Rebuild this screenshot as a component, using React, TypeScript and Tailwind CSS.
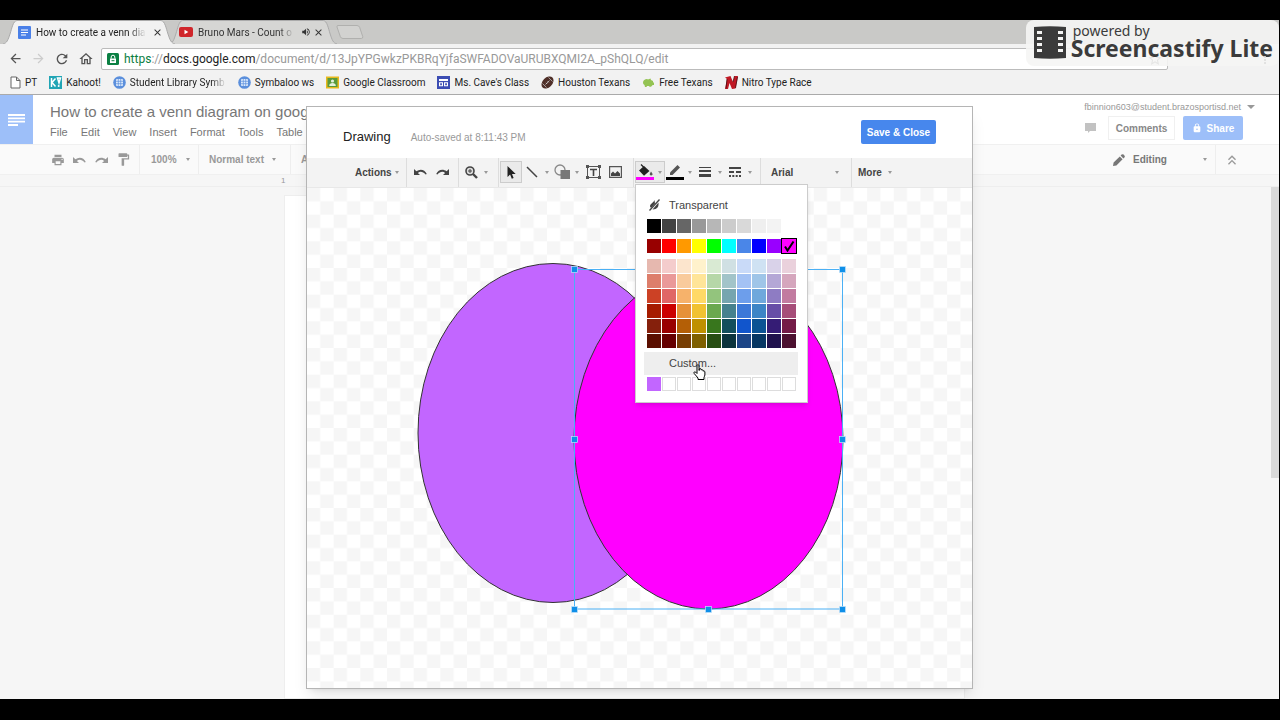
import type { ReactNode } from "react";
import {
  MdArrowBack,
  MdArrowForward,
  MdClose,
  MdFormatPaint,
  MdKeyboardDoubleArrowUp,
  MdLock,
  MdMoreVert,
  MdOutlineHome,
  MdPrint,
  MdRefresh,
  MdStarBorder,
  MdVolumeUp,
} from "react-icons/md";

const grays = ["#000000", "#434343", "#666666", "#999999", "#b7b7b7", "#cccccc", "#d9d9d9", "#efefef", "#f3f3f3", "#ffffff"];

const brights = ["#980000", "#ff0000", "#ff9900", "#ffff00", "#00ff00", "#00ffff", "#4a86e8", "#0000ff", "#9900ff", "#ff00ff"];

const shades = [
  "#e6b8af", "#f4cccc", "#fce5cd", "#fff2cc", "#d9ead3", "#d0e0e3", "#c9daf8", "#cfe2f3", "#d9d2e9", "#ead1dc",
  "#dd7e6b", "#ea9999", "#f9cb9c", "#ffe599", "#b6d7a8", "#a2c4c9", "#a4c2f4", "#9fc5e8", "#b4a7d6", "#d5a6bd",
  "#cc4125", "#e06666", "#f6b26b", "#ffd966", "#93c47d", "#76a5af", "#6d9eeb", "#6fa8dc", "#8e7cc3", "#c27ba0",
  "#a61c00", "#cc0000", "#e69138", "#f1c232", "#6aa84f", "#45818e", "#3c78d8", "#3d85c6", "#674ea7", "#a64d79",
  "#85200c", "#990000", "#b45f06", "#bf9000", "#38761d", "#134f5c", "#1155cc", "#0b5394", "#351c75", "#741b47",
  "#5b0f00", "#660000", "#783f04", "#7f6000", "#274e13", "#0c343d", "#1c4587", "#073763", "#20124d", "#4c1130",
];

const custom = ["#c266ff", "", "", "", "", "", "", "", "", ""];

const menus = ["File", "Edit", "View", "Insert", "Format", "Tools", "Table"];

const SymbalooIcon = () => (
  <svg viewBox="0 0 13 13" className="size-[13px]">
    <circle cx="6.5" cy="6.5" r="6.3" fill="#5b8fdc" />
    <rect x="3" y="3" width="7" height="7" rx="1" fill="#dbe9fb" />
    <path d="M3 5.3h7M3 7.7h7M5.3 3v7M7.7 3v7" stroke="#5b8fdc" strokeWidth=".7" />
  </svg>
);

const bookmarks: { label: string; icon: ReactNode; fade?: boolean }[] = [
  {
    label: "PT",
    icon: (
      <svg viewBox="0 0 11 13" className="h-[13px] w-[11px]">
        <path d="M1 1h5.5L10 4.5V12H1zM6.5 1v3.5H10" fill="#fff" stroke="#666" />
      </svg>
    ),
  },
  {
    label: "Kahoot!",
    icon: (
      <svg viewBox="0 0 13 13" className="size-[13px]">
        <rect width="13" height="13" fill="#21a5b5" />
        <path d="M2.5 2v9M6.5 2.5L3 6.5l3.500 4M8.500 2h3l-1.500 5z" fill="none" stroke="#fff" strokeWidth="1.5" />
        <circle cx="9.7" cy="10" r="1" fill="#fff" />
      </svg>
    ),
  },
  { label: "Student Library Symbaloo", icon: <SymbalooIcon />, fade: true },
  { label: "Symbaloo ws", icon: <SymbalooIcon /> },
  {
    label: "Google Classroom",
    icon: (
      <svg viewBox="0 0 13 13" className="size-[13px]">
        <rect width="13" height="12" y="0.5" fill="#e8b91c" />
        <rect x="1.5" y="2" width="10" height="9" fill="#5a9a3c" />
        <circle cx="6.5" cy="5" r="1.6" fill="#e4f0dc" />
        <path d="M3.2 10c0-2.2 1.500-3 3.300-3s3.300.8 3.300 3z" fill="#e4f0dc" />
      </svg>
    ),
  },
  {
    label: "Ms. Cave's Class",
    icon: (
      <svg viewBox="0 0 13 13" className="size-[13px]">
        <rect width="13" height="13" fill="#3c4db3" />
        <path d="M2 3h9v2H2zM2 6.300h4v4H2zM7 6.300h4v4H7z" fill="#fff" />
        <path d="M3.200 7.300h1.700v2H3.200zM8.200 7.300h1.700v2H8.200z" fill="#3c4db3" />
      </svg>
    ),
  },
  {
    label: "Houston Texans",
    icon: (
      <svg viewBox="0 0 13 13" className="size-[13px]">
        <ellipse cx="6.500" cy="6.500" rx="7" ry="4.800" transform="rotate(-45 6.500 6.500)" fill="#4f2f28" />
        <path d="M1.500 7.500l4 4M7.500 1.500l4 4" stroke="#bbb" strokeWidth=".8" />
        <path d="M4.500 8.500l4-4M5 6.800l1.200 1.200M6.600 5.200l1.200 1.200" stroke="#ddd" strokeWidth=".7" />
      </svg>
    ),
  },
  {
    label: "Free Texans",
    icon: (
      <svg viewBox="0 0 13 13" className="size-[13px]">
        <path d="M1 6.500c0-2.300 2-3.500 4-3.500l1 .5L8.500 2.500 9 4l2 1v1.500h1V9h-1.300L9 10.800H7.500L7 10H5l-.5 1H3L2.500 9C1.500 8.500 1 7.500 1 6.500z" fill="#94c353" />
      </svg>
    ),
  },
  {
    label: "Nitro Type Race",
    icon: (
      <svg viewBox="0 0 13 13" className="size-[13px]">
        <path d="M0 1.500L5.500 0 8 6l1.500-6H13l-2.500 12.500L7 13 4.500 7 3 13H0L2 3z" fill="#c01824" />
        <path d="M2 3L1 12.500M8 6l1.500-6M10.500 12L12.500 1" stroke="#4a0a10" strokeWidth=".8" />
      </svg>
    ),
  },
];

const Caret = () => <span className="size-0 shrink-0 border-x-2 border-t-3 border-x-transparent border-t-[#999]" />;

const UndoIcon = ({ flip = false }: { flip?: boolean }) => (
  <svg viewBox="0 0 13 8" className={flip ? "h-2 w-[13px] -scale-x-100" : "h-2 w-[13px]"}>
    <path d="M0 1v6h6L3.900 4.900C5.600 3.400 8.800 3 11.600 6.600l1.200-.5C10.800 1.600 6.200.5 2.400 3.300z" fill="currentColor" />
  </svg>
);

const PencilIcon = () => (
  <svg viewBox="0 0 12 12" className="size-3">
    <path d="M0 12l.6-3.400L6.800 2.400l2.800 2.800-6.200 6.200zM7.600 1.600l1-1a1.500 1.500 0 012 0l.8.8a1.500 1.500 0 010 2l-1 1z" fill="#777" />
  </svg>
);

const Sep = () => <span className="w-px self-stretch bg-[#ddd]" />;

const Tool = ({ label, caret, active, children }: { label: string; caret?: boolean; active?: boolean; children: ReactNode }) => (
  <button
    aria-label={label}
    className={`flex h-[22px] items-center ${caret ? "w-[30px] justify-between pr-[3px] pl-px" : "w-[22px] justify-center"} ${active ? "bg-[#eaeaea] ring-1 ring-[#ccc] ring-inset" : ""}`}
  >
    <span className="flex w-[18px] justify-center">{children}</span>
    {caret && <Caret />}
  </button>
);

const Swatches = ({ colors, name }: { colors: string[]; name: string }) => (
  <div className="grid w-[149px] grid-cols-10 gap-px">
    {colors.map((c, i) => (
      <button
        key={i}
        aria-label={`${name} ${c || "empty"}`}
        className={`flex h-[14px] items-center justify-center ${c === "#ff00ff" ? "outline-1 outline-black" : ""} ${c ? "" : "border border-[#ddd]"}`}
        style={{ backgroundColor: c || "#fff" }}
      >
        {c === "#ff00ff" && (
          <svg viewBox="0 0 12 12" className="size-3">
            <path d="M2 6.500l2.500 4L10.500 1.500" fill="none" stroke="#000" strokeWidth="2" />
          </svg>
        )}
      </button>
    ))}
  </div>
);

const FillMenu = () => (
  <div className="absolute top-full left-0 z-10 mt-px w-[173px] border border-[#ccc] bg-white pb-[11px] text-[11px] font-normal text-[#444] shadow-md">
    <button className="mt-[9px] flex h-[22px] w-full items-center gap-[9px] pl-[13px]">
      <svg viewBox="0 0 11 12" className="h-3 w-[11px]">
        <path d="M1 7.500C1 4.500 4 4.500 5.500 1l.5 3.500L2 9zM3.500 10.500L9.500 3.500c.5 4-1 7-6 7z" fill="#444" />
        <path d="M.5 11.500L10.500.5" stroke="#444" strokeWidth="1.300" />
      </svg>
      Transparent
    </button>
    <div className="flex flex-col gap-[6px] pt-[3px] pl-[11px]">
      <Swatches colors={grays} name="Gray" />
      <Swatches colors={brights} name="Color" />
      <Swatches colors={shades} name="Shade" />
    </div>
    <button className="relative mx-2 mt-1 flex h-[23px] w-[154px] items-center bg-[#eee] pl-[25px]">
      Custom...
      <svg viewBox="0 0 13 16" className="absolute top-3 left-[49px] h-4 w-[13px]">
        <path
          d="M4 1.500C4 .5 5.800.5 5.900 1.500l.3 5V5.200c.3-1 1.800-.8 1.900.2v.7c.4-.8 1.800-.5 1.900.4v.7c.5-.7 1.900-.3 1.900.8v3c0 1-.8 1.500-.9 2.500v2H5v-1.500L1.200 9.500C.3 8.300 1.700 7.300 2.700 8.200L4 9.500z"
          fill="#fff"
          stroke="#000"
        />
      </svg>
    </button>
    <div className="pt-[2px] pl-[11px]">
      <Swatches colors={custom} name="Custom" />
    </div>
  </div>
);

const DrawingToolbar = () => (
  <div className="flex h-[30px] items-center border-b border-[#e8e8e8] bg-[#f3f3f3] text-[10px] font-bold text-[#444]">
    <button className="flex w-[99px] items-center gap-[3px] pl-12">
      Actions <Caret />
    </button>
    <Sep />
    <div className="flex w-[51px] pl-[2px]">
      <Tool label="Undo"><UndoIcon /></Tool>
      <Tool label="Redo"><UndoIcon flip /></Tool>
    </div>
    <Sep />
    <div className="flex w-[39px] pl-[2px]">
      <Tool label="Zoom" caret>
        <svg viewBox="0 0 13 13" className="size-[13px]">
          <circle cx="5" cy="5" r="4" fill="#ddd" stroke="#444" strokeWidth="1.600" />
          <path d="M3 5h4M5 3v4" stroke="#444" />
          <path d="M8 8l4 4" stroke="#444" strokeWidth="2.400" />
        </svg>
      </Tool>
    </div>
    <Sep />
    <div className="flex w-[134px] items-center pl-px">
      <Tool label="Select" active>
        <svg viewBox="0 0 9 13" className="h-[13px] w-[9px]">
          <path d="M.5 0v11l2.600-2.400L4.800 12.700l1.800-.8L5 8h3.700z" fill="#222" />
        </svg>
      </Tool>
      <Tool label="Line" caret>
        <svg viewBox="0 0 12 12" className="size-3">
          <path d="M1 1l10 10" stroke="#444" strokeWidth="1.500" />
        </svg>
      </Tool>
      <Tool label="Shape" caret>
        <svg viewBox="0 0 17 16" className="h-4 w-[17px] shrink-0">
          <circle cx="6" cy="6" r="5" fill="none" stroke="#888" strokeWidth="1.300" />
          <rect x="6.500" y="6" width="9.500" height="9" fill="#777" />
        </svg>
      </Tool>
      <Tool label="Text box">
        <svg viewBox="0 0 15 14" className="h-[14px] w-[15px]">
          <path d="M1.500 1.500h12v11h-12z" fill="none" stroke="#555" />
          <path d="M4 4.500h7M7.500 4v7" fill="none" stroke="#444" strokeWidth="1.600" />
          <path d="M0 0h3v3H0zM12 0h3v3h-3zM0 11h3v3H0zM12 11h3v3h-3z" fill="#555" />
        </svg>
      </Tool>
      <Tool label="Image">
        <svg viewBox="0 0 13 12" className="h-3 w-[13px]">
          <path d="M.6.6h11.800v10.800H.6z" fill="none" stroke="#555" strokeWidth="1.200" />
          <path d="M2 10V7.500l2-2 2 2L8.500 5 11 7.500V10z" fill="#444" />
        </svg>
      </Tool>
    </div>
    <Sep />
    <div className="flex w-[126px] items-center pl-px">
      <div className="relative">
        <Tool label="Fill color" caret active>
          <svg viewBox="0 0 18 16" className="h-4 w-[18px] shrink-0">
            <path d="M3 6.500L8 2l5.500 5L8 11.800z" fill="#222" />
            <path d="M5 .5l4.500 4.500" stroke="#222" strokeWidth="1.300" />
            <path d="M15 7.500c1 1.500 1.800 2.300 1.500 3.200-.5 1-2.300 1-2.700 0-.3-1 .5-1.700 1.200-3.200z" fill="#555" />
            <path d="M0 13h18v3H0z" fill="#ff00ff" />
          </svg>
        </Tool>
        <FillMenu />
      </div>
      <Tool label="Line color" caret>
        <svg viewBox="0 0 18 16" className="h-4 w-[18px] shrink-0">
          <path d="M4 11V8.500L11.500 1 14 3.500 6.500 11z" fill="#555" />
          <path d="M0 13h18v3H0z" fill="#000" />
        </svg>
      </Tool>
      <Tool label="Line weight" caret>
        <svg viewBox="0 0 12 10" className="h-[10px] w-3 shrink-0">
          <path d="M0 0h12v1H0zM0 3h12v2H0zM0 7h12v3H0z" fill="#444" />
        </svg>
      </Tool>
      <Tool label="Line dash" caret>
        <svg viewBox="0 0 12 10" className="h-[10px] w-3 shrink-0">
          <path d="M0 0h12v2H0zM0 4h5v2H0zM7 4h5v2H7zM0 8h2v2H0zM3.300 8h2v2h-2zM6.700 8h2v2h-2zM10 8h2v2h-2z" fill="#444" />
        </svg>
      </Tool>
    </div>
    <Sep />
    <button className="flex w-[90px] items-center justify-between pr-3 pl-[10px]">
      Arial <Caret />
    </button>
    <Sep />
    <button className="flex items-center gap-[6px] pl-[6px]">
      More <Caret />
    </button>
  </div>
);

const handles = [[267, 81], [401, 81], [535, 81], [267, 251], [535, 251], [267, 421], [401, 421], [535, 421]];

const Canvas = () => (
  <svg viewBox="0 0 665 500" className="block w-full" role="img" aria-label="Venn diagram">
    <defs>
      <pattern id="checker" width="26.670" height="26.670" patternUnits="userSpaceOnUse">
        <path d="M0 0h13.330v13.330H0zM13.330 13.330h13.340v13.340H13.330z" fill="#f6f6f6" />
      </pattern>
    </defs>
    <rect width="665" height="500" fill="#fff" />
    <rect width="665" height="500" fill="url(#checker)" />
    <ellipse cx="246" cy="245" rx="135" ry="169.500" fill="#c266ff" stroke="#333" />
    <ellipse cx="401.500" cy="251.500" rx="134.500" ry="169.500" fill="#ff00ff" stroke="#333" />
    <rect x="267.500" y="81.500" width="268" height="339.500" fill="none" stroke="#4ab0f5" />
    {handles.map(([x, y]) => (
      <rect key={`${x}-${y}`} x={x - 2.500} y={y - 2.500} width="6" height="6" fill="#0f8fe8" stroke="#bfe2fb" strokeWidth=".7" />
    ))}
  </svg>
);

const DrawingDialog = () => (
  <div role="dialog" aria-label="Drawing" className="w-[667px] border border-[#b5b5b5] bg-white shadow-lg">
    <div className="flex h-[51px] items-center pr-9 pl-9">
      <h1 className="pt-[10px] text-[13px] text-[#222]">Drawing</h1>
      <p className="pt-[11px] pl-5 text-[10px] text-[#999]">Auto-saved at 8:11:43 PM</p>
      <button className="ml-auto h-6 w-[75px] rounded-xs bg-[#4787ed] text-[10px] font-bold text-white">Save &amp; Close</button>
    </div>
    <DrawingToolbar />
    <Canvas />
  </div>
);

const TabShape = ({ fill }: { fill: string }) => (
  <svg viewBox="0 0 172 24" preserveAspectRatio="none" className="absolute inset-0 -z-10 h-full w-full">
    <path d="M0 24C4 23 5 20 7 14S10 1 14 0.500H158C162 1 163 8 165 14S168 23 172 24" fill={fill} stroke="#aaa" />
  </svg>
);

const BrowserBar = () => (
  <header className="font-[Roboto,sans-serif] text-[#333]">
    <div className="isolate flex h-6 items-center bg-[#c9c9c7] pl-[3px] text-[10px]">
      <div className="relative z-10 flex h-6 w-[172px] items-center pr-3 pl-[15px]">
        <TabShape fill="#f2f2f2" />
        <svg viewBox="0 0 13 13" className="size-[13px] shrink-0">
          <rect width="13" height="13" rx="1" fill="#4a80e8" />
          <path d="M3 4h7M3 6.500h7M3 9h5" stroke="#fff" strokeWidth="1.200" />
        </svg>
        <span className="ml-[5px] w-[110px] overflow-hidden mask-r-from-85% whitespace-nowrap text-[#222]">How to create a venn dia</span>
        <button aria-label="Close tab" className="ml-auto"><MdClose className="size-[11px]" /></button>
      </div>
      <div className="relative -ml-[6px] flex h-6 w-[168px] items-center pr-[13px] pl-[10px]">
        <TabShape fill="#d6d6d4" />
        <svg viewBox="0 0 14 10" className="h-[10px] w-[14px] shrink-0">
          <rect width="14" height="10" rx="2" fill="#d0262b" />
          <path d="M5.500 2.800v4.400L9.300 5z" fill="#fff" />
        </svg>
        <span className="ml-[5px] w-[96px] overflow-hidden mask-r-from-85% whitespace-nowrap">Bruno Mars - Count o</span>
        <MdVolumeUp className="ml-auto size-[10px]" />
        <button aria-label="Close tab" className="ml-[2px]"><MdClose className="size-[11px]" /></button>
      </div>
      <button aria-label="New tab" className="-ml-px">
        <svg viewBox="0 0 28 14" className="h-[14px] w-7">
          <path d="M2 .5h19q2 0 2.700 2l3 9q.5 2-1.500 2H7q-2 0-2.700-2L1 2Q.5.5 2 .5z" fill="#d2d2d0" stroke="#b0b0ae" />
        </svg>
      </button>
    </div>
    <div className="flex h-[29px] items-center bg-[#f2f2f2] pr-[111px] pl-2 text-[#555]">
      <button aria-label="Back" className="mr-2"><MdArrowBack className="size-[15px]" /></button>
      <button aria-label="Forward" className="mr-2 text-[#ccc]"><MdArrowForward className="size-[15px]" /></button>
      <button aria-label="Reload" className="mr-2"><MdRefresh className="size-4" /></button>
      <button aria-label="Home" className="mr-[7px]"><MdOutlineHome className="size-4" /></button>
      <div className="flex h-[22px] min-w-0 flex-1 items-center rounded-xs border border-[#bbb] bg-white pr-1 pl-[5px] text-[12px]">
        <svg viewBox="0 0 12 12" className="size-3 shrink-0">
          <rect width="12" height="12" rx="1.500" fill="#0b8043" />
          <path d="M4.200 5.500V4a1.800 1.800 0 013.600 0v1.500" fill="none" stroke="#fff" />
          <path d="M3 5.500h6V10H3z" fill="#fff" />
          <path d="M4.500 7.700h3" stroke="#0b8043" />
        </svg>
        <a href="#" className="ml-[5px] flex-1 truncate text-[#999]">
          <span className="text-[#0b8043]">https</span>://<span className="text-[#222]">docs.google.com</span>
          /document/d/13JpYPGwkzPKBRqYjfaSWFADOVaURUBXQMI2A_pShQLQ/edit
        </a>
        <MdStarBorder className="size-4" />
      </div>
    </div>
    <nav className="flex h-[22px] items-center gap-3 border-b border-[#aaa] bg-[#f2f2f2] pb-[2px] pl-[10px] text-[10px] text-[#222]">
      {bookmarks.map((b) => (
        <a key={b.label} href="#" className="flex items-center gap-1">
          {b.icon}
          <span className={b.fade ? "w-[96px] overflow-hidden mask-r-from-85% whitespace-nowrap" : "whitespace-nowrap"}>
            {b.fade ? b.label.slice(0, 20) : b.label}
          </span>
        </a>
      ))}
    </nav>
  </header>
);

const DocsPage = () => (
  <div className="flex h-full flex-col bg-[#f6f6f6]">
    <div className="flex h-[49px] bg-white">
      <div className="flex w-[33px] items-center justify-center bg-[#9dbff9]">
        <svg viewBox="0 0 17 12" className="h-3 w-[17px]">
          <path d="M0 1h17M0 4.300h17M0 7.600h17M0 11h10" stroke="#fff" strokeWidth="1.800" />
        </svg>
      </div>
      <div className="pt-[7px] pl-[17px] text-[#777]">
        <p className="text-[15px] leading-5">How to create a venn diagram on google docs</p>
        <div className="flex gap-[13px] pt-[2px] text-[11px] leading-4">
          {menus.map((m) => (
            <button key={m}>{m}</button>
          ))}
        </div>
      </div>
      <div className="ml-auto flex flex-col items-end pt-[6px]">
        <button className="flex items-center gap-[6px] pr-6 text-[9px] leading-3 text-[#999]">
          fbinnion603@student.brazosportisd.net
          <span className="size-0 border-x-4 border-t-4 border-x-transparent border-t-[#999]" />
        </button>
        <div className="flex items-center gap-2 pt-[3px] pr-9 text-[10px] font-bold">
          <svg viewBox="0 0 11 10" className="mr-1 h-[10px] w-[11px]">
            <path d="M0 0h11v8H5L3 10V8H0z" fill="#c2c2c2" />
          </svg>
          <button className="h-6 w-[67px] border border-[#f0f0f0] text-[#888]">Comments</button>
          <button className="flex h-6 w-[60px] items-center justify-center gap-[5px] rounded-xs bg-[#9dbff9] text-white">
            <MdLock className="size-[10px]" /> Share
          </button>
        </div>
      </div>
    </div>
    <div className="flex h-[31px] items-center border-y border-[#f0f0f0] bg-[#fafafa] pl-[51px] text-[10px] font-bold text-[#999]">
      <button aria-label="Print" className="mr-2"><MdPrint className="size-[14px]" /></button>
      <button aria-label="Undo" className="mr-[9px]"><UndoIcon /></button>
      <button aria-label="Redo" className="mr-2"><UndoIcon flip /></button>
      <button aria-label="Paint format" className="mr-2"><MdFormatPaint className="size-[15px]" /></button>
      <span className="h-full w-px bg-[#eee]" />
      <button className="flex w-[58px] items-center justify-between pr-2 pl-[11px]">100% <Caret /></button>
      <span className="h-full w-px bg-[#eee]" />
      <button className="flex w-[91px] items-center justify-between pr-[14px] pl-[10px]">Normal text <Caret /></button>
      <span className="h-full w-px bg-[#eee]" />
      <button className="pl-[10px]">Arial</button>
      <button className="ml-auto flex w-[102px] items-center gap-2 pr-2 text-[#777]">
        <PencilIcon />
        <span className="mr-auto">Editing</span>
        <Caret />
      </button>
      <span className="h-full w-px bg-[#eee]" />
      <button aria-label="Hide menus" className="mr-[39px] ml-2"><MdKeyboardDoubleArrowUp className="size-4" /></button>
    </div>
    <div className="flex h-3 items-center border-b border-[#eee] pl-[281px] text-[8px] text-[#999]">1</div>
    <div className="flex flex-1">
      <div className="flex flex-1 justify-center pt-2 pr-[22px]">
        <div className="w-[681px] border border-[#eee] bg-white" />
      </div>
      <div className="h-[291px] w-2 bg-[#d9d9d9]" />
    </div>
  </div>
);

const Watermark = () => (
  <div className="absolute top-0 right-0 flex h-[46px] items-start gap-1 rounded-lg bg-[#f5f5f4]/90 pt-[6px] pr-[6px] pl-[7px] font-['Noto_Sans',sans-serif] text-[#3b3b3b]">
    <svg viewBox="0 0 34 33" className="h-[33px] w-[34px]">
      <path d="M1 1q16-1.500 32 0v31q-16 1.500-32 0z" fill="#3b3b3b" />
      <path d="M4 5h5v3H4zM4 11h5v3H4zM4 17h5v3H4zM4 23h5v3H4zM25 5h5v3h-5zM25 11h5v3h-5zM25 17h5v3h-5zM25 23h5v3h-5z" fill="#f5f5f4" />
    </svg>
    <div>
      <p className="pl-[2px] text-[14px] leading-[10px]">powered by</p>
      <p className="text-[23px] leading-6 font-bold">Screencastify Lite</p>
    </div>
    <MdMoreVert className="absolute right-2 bottom-0 size-3 text-[#ddd]" />
  </div>
);

export default function App() {
  return (
    <div className="flex h-screen flex-col bg-black pt-5 pr-px pb-[21px] font-['Liberation_Sans',Arial,sans-serif]">
      <div className="relative flex min-h-0 flex-1 flex-col overflow-hidden bg-white">
        <BrowserBar />
        <main className="relative min-h-0 flex-1">
          <DocsPage />
          <div className="absolute inset-0 flex items-center justify-center">
            <DrawingDialog />
          </div>
        </main>
        <Watermark />
      </div>
    </div>
  );
}
